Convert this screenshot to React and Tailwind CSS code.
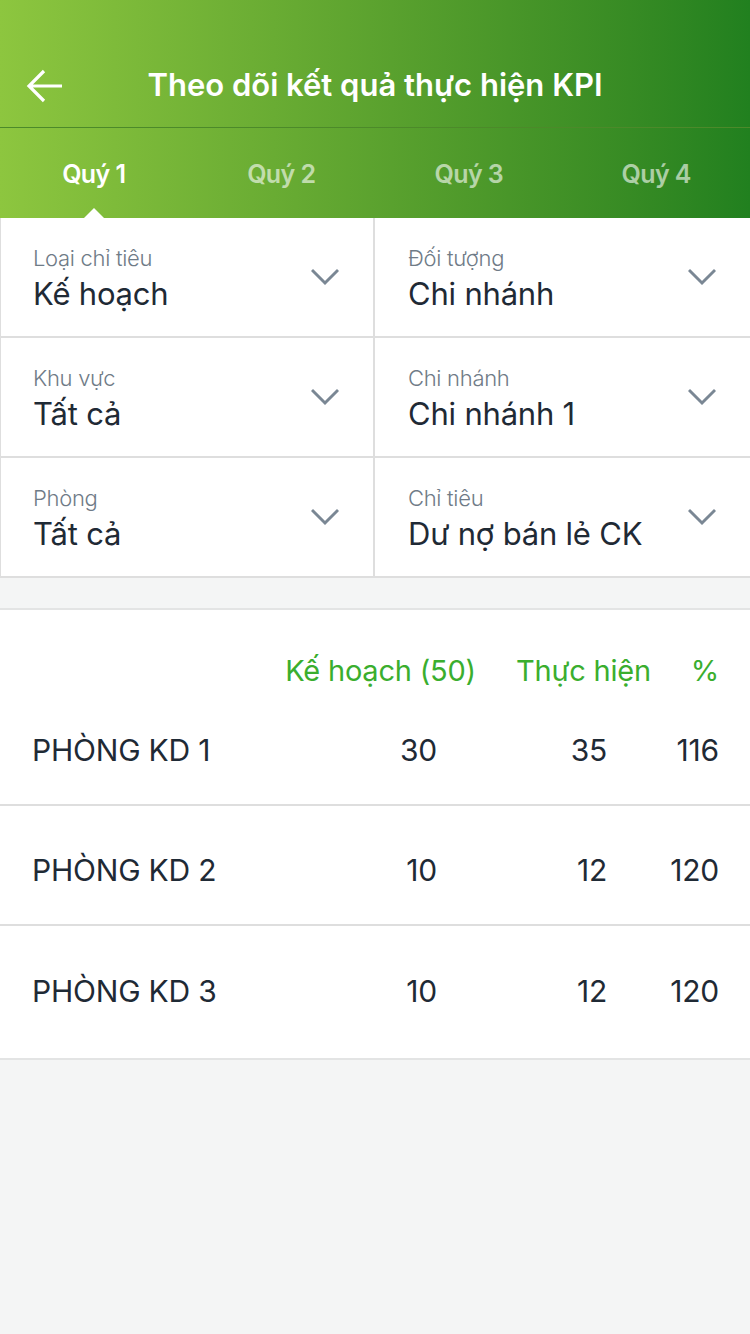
import React, { useState } from "react";

const FONT = { fontFamily: "Inter, 'Noto Sans', sans-serif" };

const filters = [
  { label: "Loại chỉ tiêu", value: "Kế hoạch" },
  { label: "Đối tượng", value: "Chi nhánh" },
  { label: "Khu vực", value: "Tất cả" },
  { label: "Chi nhánh", value: "Chi nhánh 1" },
  { label: "Phòng", value: "Tất cả" },
  { label: "Chỉ tiêu", value: "Dư nợ bán lẻ CK" },
];

const rows = [
  { name: "PHÒNG KD 1", plan: 30, done: 35, pct: 116 },
  { name: "PHÒNG KD 2", plan: 10, done: 12, pct: 120 },
  { name: "PHÒNG KD 3", plan: 10, done: 12, pct: 120 },
];

const Chevron = () => (
  <svg width="28" height="18" viewBox="0 0 28 18" fill="none" className="shrink-0">
    <path d="M2 3 L14 15 L26 3" stroke="#7a8794" strokeWidth="3" strokeLinecap="square" />
  </svg>
);

const FilterCell = ({ label, value, right }) => (
  <div
    className={`flex h-[120px] items-center justify-between border-b-2 border-[#dedede] ${
      right ? "pl-[33px] pr-[34px]" : "border-r-2 border-l pl-[32px] pr-[34px]"
    }`}
  >
    <div className="flex flex-col pt-[3px]">
      <span className="text-[22px] font-light leading-[26px] tracking-[-0.3px] text-[#6f7b87]">{label}</span>
      <span className="mt-[5px] text-[31px] leading-[36px] tracking-[-0.2px] text-[#1f2a35]">{value}</span>
    </div>
    <Chevron />
  </div>
);

export default function App() {
  const [tab, setTab] = useState(0);
  const tabs = ["Quý 1", "Quý 2", "Quý 3", "Quý 4"];

  return (
    <div className="min-h-[1334px] w-[750px] bg-[#f4f5f5]" style={FONT}>
      <div className="bg-gradient-to-r from-[#8dc63f] to-[#21801f]">
        <div className="relative flex h-[128px] items-center justify-center border-b border-[#4c8a2a]">
          <button className="absolute left-[26px] top-[68px]">
            <svg width="38" height="36" viewBox="0 0 38 36" fill="none">
              <path d="M36 18 H4 M18 3 L3 18 L18 33" stroke="white" strokeWidth="3.2" />
            </svg>
          </button>
          <h1 className="pt-[42px] text-[31px] font-semibold leading-[36px] tracking-[0px] text-white">
            Theo dõi kết quả thực hiện KPI
          </h1>
        </div>
        <div className="grid h-[90px] grid-cols-4">
          {tabs.map((t, i) => (
            <button
              key={t}
              onClick={() => setTab(i)}
              className={`relative flex items-center justify-center pt-[4px] text-[25px] font-semibold tracking-[-0.6px] ${
                tab === i ? "text-white" : "text-white/60"
              }`}
            >
              {t}
              {tab === i && (
                <span className="absolute bottom-0 left-1/2 h-0 w-0 -translate-x-1/2 border-x-[10px] border-b-[10px] border-x-transparent border-b-white" />
              )}
            </button>
          ))}
        </div>
      </div>

      <div className="grid grid-cols-2 bg-white">
        {filters.map((f, i) => (
          <FilterCell key={f.label} label={f.label} value={f.value} right={i % 2 === 1} />
        ))}
      </div>

      <div className="mt-[30px] border-t-2 border-[#e3e4e4] bg-white pb-[12px]">
        <div className="flex h-[76px] items-end pr-[31px] text-[29px] leading-[30px] tracking-[-0.2px] text-[#3aae2e]">
          <div className="flex-1" />
          <div className="w-[226px] text-right">Kế hoạch (50)</div>
          <div className="w-[175px] text-right">Thực hiện</div>
          <div className="w-[68px] text-right">%</div>
        </div>
        {rows.map((r, i) => (
          <div
            key={r.name}
            className={`flex h-[120px] items-center pl-[32px] pr-[31px] pt-[10px] text-[30px] leading-[36px] tracking-[-0.2px] text-[#1f2a35] ${
              i < rows.length - 1 ? "border-b-2 border-[#dedede]" : ""
            }`}
          >
            <div className="flex-1">{r.name}</div>
            <div className="w-[226px] pr-[39px] text-right">{r.plan}</div>
            <div className="w-[175px] pr-[44px] text-right">{r.done}</div>
            <div className="w-[68px] text-right">{r.pct}</div>
          </div>
        ))}
      </div>
      <div className="border-t-2 border-[#e3e4e4]" />
    </div>
  );
}
